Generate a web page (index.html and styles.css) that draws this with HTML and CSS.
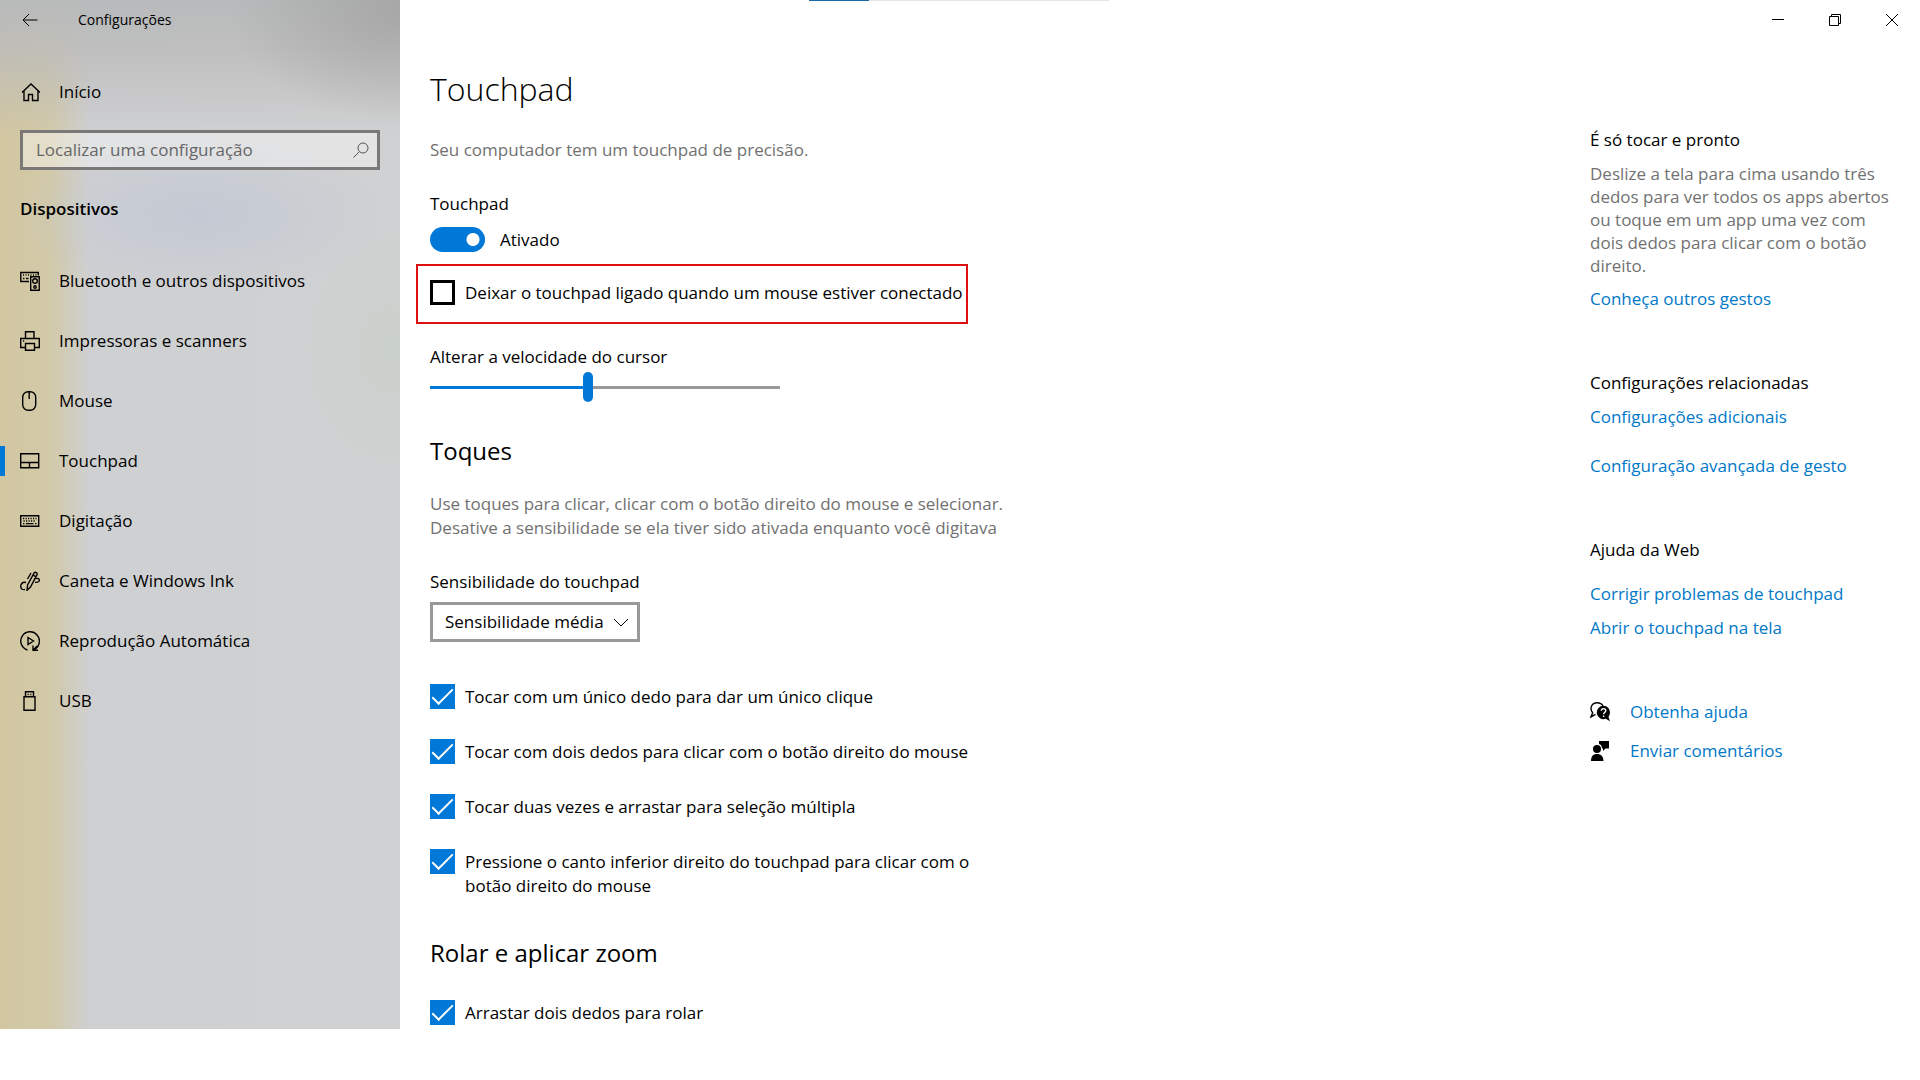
FILE: index.html
```html
<!DOCTYPE html>
<html lang="pt-BR">
<head>
  <meta charset="UTF-8" />
  <meta name="viewport" content="width=device-width, initial-scale=1.0"/>
  <title>Configurações</title>
  <link rel="stylesheet" href="styles.css">
</head>
<body>
  <div class="window">
    <aside class="sidebar">
      <div class="app-title">
        <button class="back" type="button" aria-label="Voltar">
          <svg viewBox="0 0 16 14"><path d="M15.5 7H1M7 1L1 7l6 6"/></svg>
        </button>
        <span>Configurações</span>
      </div>

      <a class="home" href="#">
        <svg class="icon" viewBox="0 0 20 20"><path d="M2 10.5L11 2l9 8.500M4 9v9.500h4.500v-6h4v6H18V9"/></svg>
        Início
      </a>

      <div class="search">
        <input type="text" placeholder="Localizar uma configuração" aria-label="Localizar uma configuração">
        <svg viewBox="0 0 16 16"><circle cx="10" cy="6" r="5"/><path d="M6.500 9.500L.5 15.500"/></svg>
      </div>

      <h2 class="category">Dispositivos</h2>

      <nav class="nav">
        <a href="#">
          <svg class="icon" viewBox="0 0 20 20"><path d="M9 10.500H.8v-9h17.500v3M3 4h1m1.500 0h1M8 4h1m1.500 0h1M13 4h1m1.500 0h1M3 7.500h1.500m1.500 0h2.500M10.700 5.700h8.500v13.500h-8.500z"/><circle cx="15" cy="10" r="2.300"/><circle cx="15" cy="16" r="1.200"/></svg>
          Bluetooth e outros dispositivos
        </a>
        <a href="#">
          <svg class="icon" viewBox="0 0 20 20"><path d="M5.500 7.500V.7h8.500v6.800M5 16.500H.7v-9h18.600v9H15M5.500 12.500h9v6.700h-9zM3 10h1.200"/></svg>
          Impressoras e scanners
        </a>
        <a href="#">
          <svg class="icon" viewBox="0 0 20 20"><rect x="2.700" y=".7" width="13" height="18.600" rx="5.500"/><path d="M9.200 1v7"/></svg>
          Mouse
        </a>
        <a class="active" href="#" aria-current="page">
          <svg class="icon" viewBox="0 0 20 20"><path d="M.7 2.700h18v14H.7zM.7 11.500h18M9.500 11.500v5"/></svg>
          Touchpad
        </a>
        <a href="#">
          <svg class="icon" viewBox="0 0 20 20"><path d="M.7 4.700h18v10.500H.7zM3 7.500h1.200m1.300 0h1.200m1.300 0h1.200m1.300 0h1.200m1.300 0h1.200m1.300 0h1M3.500 10h1.200m1.300 0h1.200m1.300 0h1.200m1.300 0h1.200m1.300 0h1.200M3 12.600h1.500m1.500 0h7.500m1.500 0h1.500"/></svg>
          Digitação
        </a>
        <a href="#">
          <svg class="icon" viewBox="0 0 20 20"><path d="M7 19.300l.6-5.300L14 2.200c1-1.800 3.800-.4 3 1.500L10.500 16 7 19.300zM13 4l3 1.800M11 2l-3.500 6M6 11.500c-3.500-.8-5.300 1.200-5.300 4 0 2 1.500 3.500 4.300 3M15.500 7.500c2.500-.5 4 .3 3.800 2-.2 1.300-1.500 2-4.300 1.800"/></svg>
          Caneta e Windows Ink
        </a>
        <a href="#">
          <svg class="icon" viewBox="0 0 20 20"><path d="M7.500 19A9.300 9.300 0 1 1 14 18.500M13 14.500v4.800h5M13.200 19l4-4M8 6.500l5.500 3.500L8 13.500z"/></svg>
          Reprodução Automática
        </a>
        <a href="#">
          <svg class="icon" viewBox="0 0 20 20"><path d="M5.500 5.500V.7h8v4.800M4 5.700h11v13.600H4zM7.500 3.500h1.200m1.500 0h1.200"/></svg>
          USB
        </a>
      </nav>
    </aside>

    <header class="titlebar">
      <div class="loading"></div>
      <div class="controls">
        <button type="button" aria-label="Minimizar"><svg viewBox="0 0 12 12"><path d="M0 5.500h12"/></svg></button>
        <button type="button" aria-label="Restaurar"><svg viewBox="0 0 12 12"><path d="M.5 2.500h9v9h-9zM2.500 2.500v-2h9v9h-2"/></svg></button>
        <button type="button" aria-label="Fechar"><svg viewBox="0 0 12 12"><path d="M0 0l12 12M12 0L0 12"/></svg></button>
      </div>
    </header>

    <main class="content">
      <h1>Touchpad</h1>
      <p class="intro">Seu computador tem um touchpad de precisão.</p>

      <label class="field-label" for="touchpad">Touchpad</label>
      <div class="toggle-row">
        <input class="toggle" type="checkbox" role="switch" id="touchpad" checked>
        <span>Ativado</span>
      </div>

      <div class="highlight">
        <label class="check"><input type="checkbox"><span>Deixar o touchpad ligado quando um mouse estiver conectado</span></label>
      </div>

      <label class="field-label" for="speed">Alterar a velocidade do cursor</label>
      <input class="slider" type="range" id="speed" min="0" max="100" value="45">

      <h2>Toques</h2>
      <p class="description">Use toques para clicar, clicar com o botão direito do mouse e selecionar. Desative a sensibilidade se ela tiver sido ativada enquanto você digitava</p>

      <label class="field-label" for="sensitivity">Sensibilidade do touchpad</label>
      <div class="select">
        <select id="sensitivity">
          <option>Sensibilidade média</option>
        </select>
        <svg viewBox="0 0 16 9"><path d="M1 1l7 7 7-7"/></svg>
      </div>

      <div class="checks">
        <label class="check"><input type="checkbox" checked><span>Tocar com um único dedo para dar um único clique</span></label>
        <label class="check"><input type="checkbox" checked><span>Tocar com dois dedos para clicar com o botão direito do mouse</span></label>
        <label class="check"><input type="checkbox" checked><span>Tocar duas vezes e arrastar para seleção múltipla</span></label>
        <label class="check"><input type="checkbox" checked><span>Pressione o canto inferior direito do touchpad para clicar com o botão direito do mouse</span></label>
      </div>

      <h2 class="scroll-title">Rolar e aplicar zoom</h2>
      <label class="check"><input type="checkbox" checked><span>Arrastar dois dedos para rolar</span></label>
    </main>

    <aside class="related">
      <section>
        <h3>É só tocar e pronto</h3>
        <p>Deslize a tela para cima usando três dedos para ver todos os apps abertos ou toque em um app uma vez com dois dedos para clicar com o botão direito.</p>
        <a href="#">Conheça outros gestos</a>
      </section>
      <section class="settings-links">
        <h3>Configurações relacionadas</h3>
        <a href="#">Configurações adicionais</a>
        <a href="#">Configuração avançada de gesto</a>
      </section>
      <section class="web-help">
        <h3>Ajuda da Web</h3>
        <a href="#">Corrigir problemas de touchpad</a>
        <a href="#">Abrir o touchpad na tela</a>
      </section>
      <section class="support">
        <a href="#">
          <svg viewBox="0 0 20 20"><path class="line" d="M5.500 12.300L1 14.800l1.700-4C-1 6 2 .8 7 .8c3 0 5 1.200 6 3.200"/><path d="M13.500 3.800a6.700 6.700 0 1 0 2.200 13l4.300 2.500-1.500-4.300c3.500-5 .3-11.200-5-11.200z"/><path class="mark" d="M11.300 8.800c0-3 4.700-2.800 4.500 0-.1 1.600-2.200 1.500-2.200 3.400M13.600 13.400v1.500"/></svg>
          Obtenha ajuda
        </a>
        <a href="#">
          <svg viewBox="0 0 20 20"><circle cx="7" cy="8" r="4"/><path d="M1 20c0-4.500 2-7 6-7s6.500 2.500 6.500 7zM9 0h10v7.500h-3.500L13 10V7.500h-1C12 5 11 3.500 9 3z"/></svg>
          Enviar comentários
        </a>
      </section>
    </aside>
  </div>
</body>
</html>
```
FILE: styles.css
```css
* {
  box-sizing: border-box;
}

body {
  margin: 0;
  font-family: "Open Sans", "Noto Sans", sans-serif;
  font-size: 17px;
  line-height: 24px;
  color: #000;
  background: #fff;
}

h1, h2, h3, p {
  margin: 0;
  font-weight: 400;
}

a {
  color: #0078c8;
  text-decoration: none;
}

button {
  border: none;
  padding: 0;
  background: none;
  cursor: pointer;
}

svg {
  flex: none;
  fill: none;
  stroke: #000;
}

.window {
  display: grid;
  grid-template-columns: 400px 1fr 330px;
  grid-template-rows: 40px auto;
}

/* Sidebar */
.sidebar {
  grid-row: 1 / 3;
  background:
    radial-gradient(ellipse 190px 80px at 200px 215px, #bcc5d599, #bcc5d500),
    radial-gradient(ellipse 170px 110px at 400px 10px, #a2a2a2cc, #a2a2a200),
    radial-gradient(ellipse 90px 120px at 390px 350px, #c8d1c899, #c8d1c800),
    linear-gradient(#b8babb 0, #bbbbbbcc 50px, #bbbbbb00 135px),
    linear-gradient(90deg, #d2c7a1 0, #d2c9a8 50px, #cfd0d2 90px, #d0d1d2 100%);
}

.app-title {
  display: flex;
  align-items: center;
  gap: 40px;
  height: 40px;
  padding-left: 22px;
  font-size: 14px;
}

.back {
  display: flex;
}

.back svg {
  width: 16px;
  height: 14px;
}

.icon {
  width: 20px;
  height: 20px;
  stroke-width: 1.4;
}

.home,
.nav a {
  display: flex;
  align-items: center;
  gap: 19px;
  padding-left: 20px;
  color: #000;
}

.home {
  margin: 40px 0 26px;
}

.search {
  display: flex;
  align-items: center;
  height: 40px;
  margin: 0 20px;
  padding: 0 8px 0 13px;
  border: 3px solid #7a7977;
  background: #ffffff66;
}

.search input {
  flex: 1;
  min-width: 0;
  border: none;
  padding: 0;
  outline: none;
  background: none;
  font: inherit;
}

.search input::placeholder {
  color: #666;
}

.search svg {
  width: 16px;
  height: 16px;
  stroke: #555;
}

.category {
  margin: 27px 20px 30px;
  font-size: 17px;
  font-weight: 600;
}

.nav a {
  height: 60px;
}

.nav .active {
  background: linear-gradient(#0078d7, #0078d7) left center / 5px 30px no-repeat;
}

/* Title bar */
.titlebar {
  grid-column: 2 / 4;
  display: flex;
  justify-content: space-between;
}

.loading {
  width: 300px;
  height: 1px;
  margin-left: 409px;
  background: linear-gradient(90deg, #1c6aa8 20%, #e5e5e5 20%);
}

.controls {
  display: flex;
}

.controls button {
  display: flex;
  align-items: center;
  justify-content: center;
  width: 57px;
  height: 40px;
}

.controls svg {
  width: 12px;
  height: 12px;
}

/* Main column */
.content {
  padding: 27px 30px 4px;
}

h1 {
  font-size: 32px;
  font-weight: 300;
  line-height: 44px;
}

.content h2 {
  margin: 33px 0 25px;
  font-size: 24px;
  line-height: 32px;
}

.intro,
.description,
.related p {
  color: #717171;
}

.intro {
  margin: 27px 0 30px;
}

.description {
  max-width: 590px;
  margin-bottom: 30px;
}

.field-label {
  display: block;
}

.toggle-row {
  display: flex;
  align-items: center;
  gap: 15px;
  height: 25px;
  margin: 11px 0 12px;
}

.toggle {
  appearance: none;
  width: 55px;
  height: 25px;
  margin: 0;
  border-radius: 13px;
  background: radial-gradient(circle at 43px 50%, #fff 6px, #0078d7 7px);
}

.highlight {
  width: fit-content;
  height: 60px;
  margin: 0 0 21px -14px;
  padding: 14px 3px 0 12px;
  border: 2px solid #e01010;
}

.check {
  display: flex;
  align-items: flex-start;
  gap: 10px;
  max-width: 540px;
}

.check span {
  padding-top: 1px;
}

.check input {
  appearance: none;
  flex: none;
  width: 25px;
  height: 25px;
  margin: 0;
  border: 3px solid #000;
}

.check input:checked {
  display: grid;
  place-items: center;
  border: none;
  background: #0078d7;
}

.check input:checked::after {
  content: "";
  width: 19px;
  height: 8px;
  margin-bottom: 5px;
  border: solid #fff;
  border-width: 0 0 2px 2px;
  transform: rotate(-45deg);
}

.slider {
  appearance: none;
  display: block;
  width: 350px;
  height: 30px;
  margin: 3px 0 0;
  background: linear-gradient(90deg, #0078d7 45%, #999 45%) center / 100% 3px no-repeat;
}

.slider::-webkit-slider-thumb {
  appearance: none;
  width: 10px;
  height: 30px;
  border-radius: 5px;
  background: #0078d7;
}

.select {
  position: relative;
  width: fit-content;
  margin: 8px 0 42px;
}

.select select {
  appearance: none;
  display: block;
  height: 40px;
  padding: 0 33px 0 12px;
  border: 3px solid #999;
  border-radius: 0;
  background: #fff;
  color: #000;
  font: inherit;
}

.select svg {
  position: absolute;
  top: 16px;
  right: 11px;
  width: 16px;
  height: 9px;
  pointer-events: none;
}

.checks {
  display: grid;
  gap: 30px;
}

.content .scroll-title {
  margin: 39px 0 31px;
}

/* Right column */
.related {
  display: grid;
  align-content: start;
  gap: 60px;
  padding: 88px 30px 0 0;
}

.related section {
  display: grid;
  gap: 10px;
}

.related h3 {
  font-size: 17px;
}

.related p {
  line-height: 23px;
}

.settings-links a:last-child {
  margin-top: 15px;
}

.web-help h3 {
  margin-bottom: 10px;
}

.related .support {
  gap: 15px;
}

.support a {
  display: flex;
  align-items: center;
  gap: 20px;
}

.support svg {
  width: 20px;
  height: 20px;
  fill: #000;
  stroke: none;
}

.support .line {
  fill: none;
  stroke: #000;
  stroke-width: 1.4;
}

.support .mark {
  fill: none;
  stroke: #fff;
  stroke-width: 1.4;
}
```
